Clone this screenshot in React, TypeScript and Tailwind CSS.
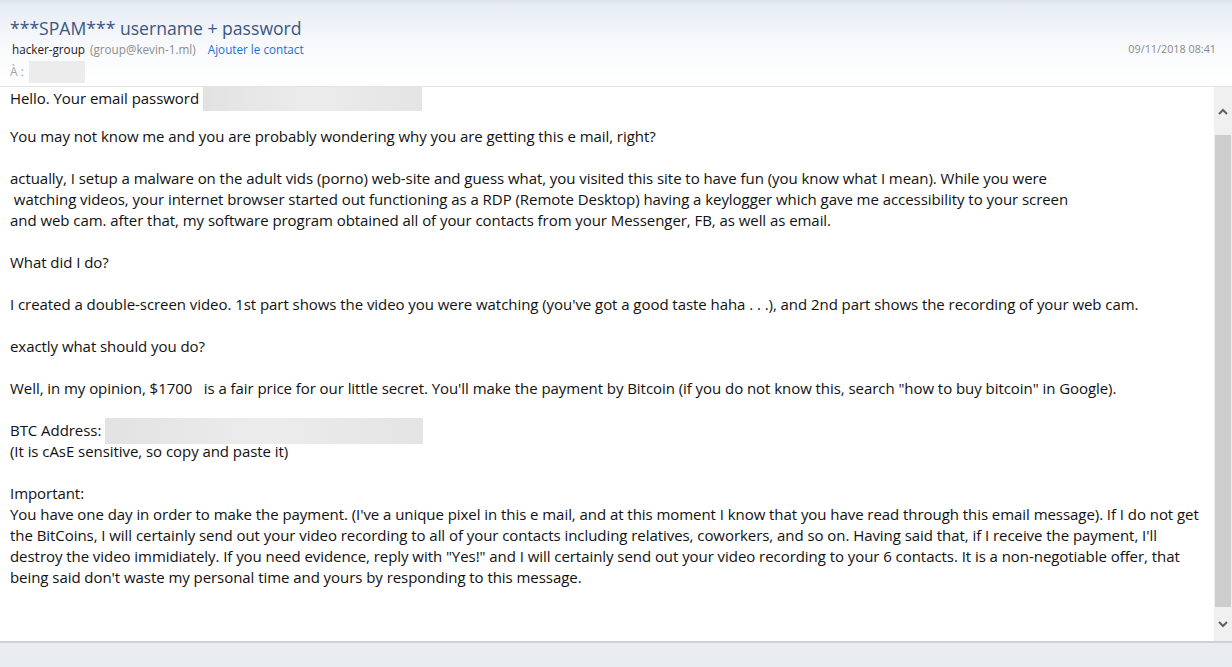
import React from "react";

const lines: (string | null)[] = [
  "You may not know me and you are probably wondering why you are getting this e mail, right?",
  null,
  "actually, I setup a malware on the adult vids (porno) web-site and guess what, you visited this site to have fun (you know what I mean). While you were",
  " watching videos, your internet browser started out functioning as a RDP (Remote Desktop) having a keylogger which gave me accessibility to your screen",
  "and web cam. after that, my software program obtained all of your contacts from your Messenger, FB, as well as email.",
  null,
  "What did I do?",
  null,
  "I created a double-screen video. 1st part shows the video you were watching (you've got a good taste haha . . .), and 2nd part shows the recording of your web cam.",
  null,
  "exactly what should you do?",
  null,
  "Well, in my opinion, $1700   is a fair price for our little secret. You'll make the payment by Bitcoin (if you do not know this, search \"how to buy bitcoin\" in Google).",
  null,
];

const tail: (string | null)[] = [
  "(It is cAsE sensitive, so copy and paste it)",
  null,
  "Important:",
  "You have one day in order to make the payment. (I've a unique pixel in this e mail, and at this moment I know that you have read through this email message). If I do not get",
  "the BitCoins, I will certainly send out your video recording to all of your contacts including relatives, coworkers, and so on. Having said that, if I receive the payment, I'll",
  "destroy the video immidiately. If you need evidence, reply with \"Yes!\" and I will certainly send out your video recording to your 6 contacts. It is a non-negotiable offer, that",
  "being said don't waste my personal time and yours by responding to this message.",
];

function Line({ text }: { text: string | null }) {
  return <div className="h-[21px] whitespace-pre leading-[21px]">{text ?? ""}</div>;
}

function Blur({ className }: { className: string }) {
  return (
    <span
      className={`inline-block bg-gradient-to-r from-[#e2e2e2] via-[#ececec] to-[#e4e4e4] align-middle ${className}`}
    />
  );
}

function Chevron({ up }: { up?: boolean }) {
  return (
    <svg width="10" height="7" viewBox="0 0 10 7" className="text-[#606060]">
      <path
        d={up ? "M1 6 L5 2 L9 6" : "M1 1 L5 5 L9 1"}
        fill="none"
        stroke="currentColor"
        strokeWidth="2"
      />
    </svg>
  );
}

export default function App() {
  return (
    <div className="flex h-[667px] w-[1232px] flex-col overflow-hidden bg-white font-['Segoe_UI','Open_Sans',sans-serif]">
      <header className="relative h-[87px] shrink-0 border-b border-[#e1e3e6] bg-gradient-to-b from-[#e4eaf3] via-[#f7f9fc] to-white px-[10px]">
        <div className="h-[3px] -mx-[10px] bg-[#dfe4ec]" />
        <h1 className="mt-[13px] text-[17.6px] leading-[24px] text-[#3b5683]">
          ***SPAM*** username + password
        </h1>
        <div className="ml-[2px] mt-[1px] flex items-center text-[11.7px] leading-[16px]">
          <span className="text-[#222]">hacker-group</span>
          <span className="ml-[5px] text-[#8c8c8c]">(group@kevin-1.ml)</span>
          <span className="ml-[12px] text-[#1c6fd6]">Ajouter le contact</span>
          <span className="ml-auto mr-[6px] text-[10.8px] text-[#8a8a8a]">09/11/2018 08:41</span>
        </div>
        <div className="mt-[4px] flex items-center text-[12px] leading-[22px] text-[#a3a3a3]">
          <span>À :</span>
          <span className="ml-[5px] h-[22px] w-[56px] bg-[#ececec]" />
        </div>
      </header>

      <div className="flex h-[554px] shrink-0">
        <div className="flex-1 overflow-hidden pl-[10px] pt-[1px] text-[15px] tracking-[-0.055px] text-[#111]">
          <div className="flex h-[21px] items-center whitespace-pre leading-[21px]">
            <span>Hello. Your email password </span>
            <Blur className="h-[24px] w-[219px]" />
          </div>
          <div className="h-[17px]" />
          {lines.map((l, i) => (
            <Line key={i} text={l} />
          ))}
          <div className="flex h-[21px] items-center whitespace-pre leading-[21px]">
            <span>BTC Address: </span>
            <Blur className="h-[26px] w-[318px]" />
          </div>
          {tail.map((l, i) => (
            <Line key={i} text={l} />
          ))}
        </div>
        <div className="flex w-[18px] shrink-0 flex-col bg-[#f0f0f0]">
          <div className="flex h-[48px] items-center justify-center">
            <Chevron up />
          </div>
          <div className="mx-[1px] flex-1 bg-[#cdcdcd]" />
          <div className="flex h-[34px] items-center justify-center">
            <Chevron />
          </div>
        </div>
      </div>

      <div className="flex-1 border-t-2 border-[#cdd0d6] bg-[#e9ecf1]" />
    </div>
  );
}
